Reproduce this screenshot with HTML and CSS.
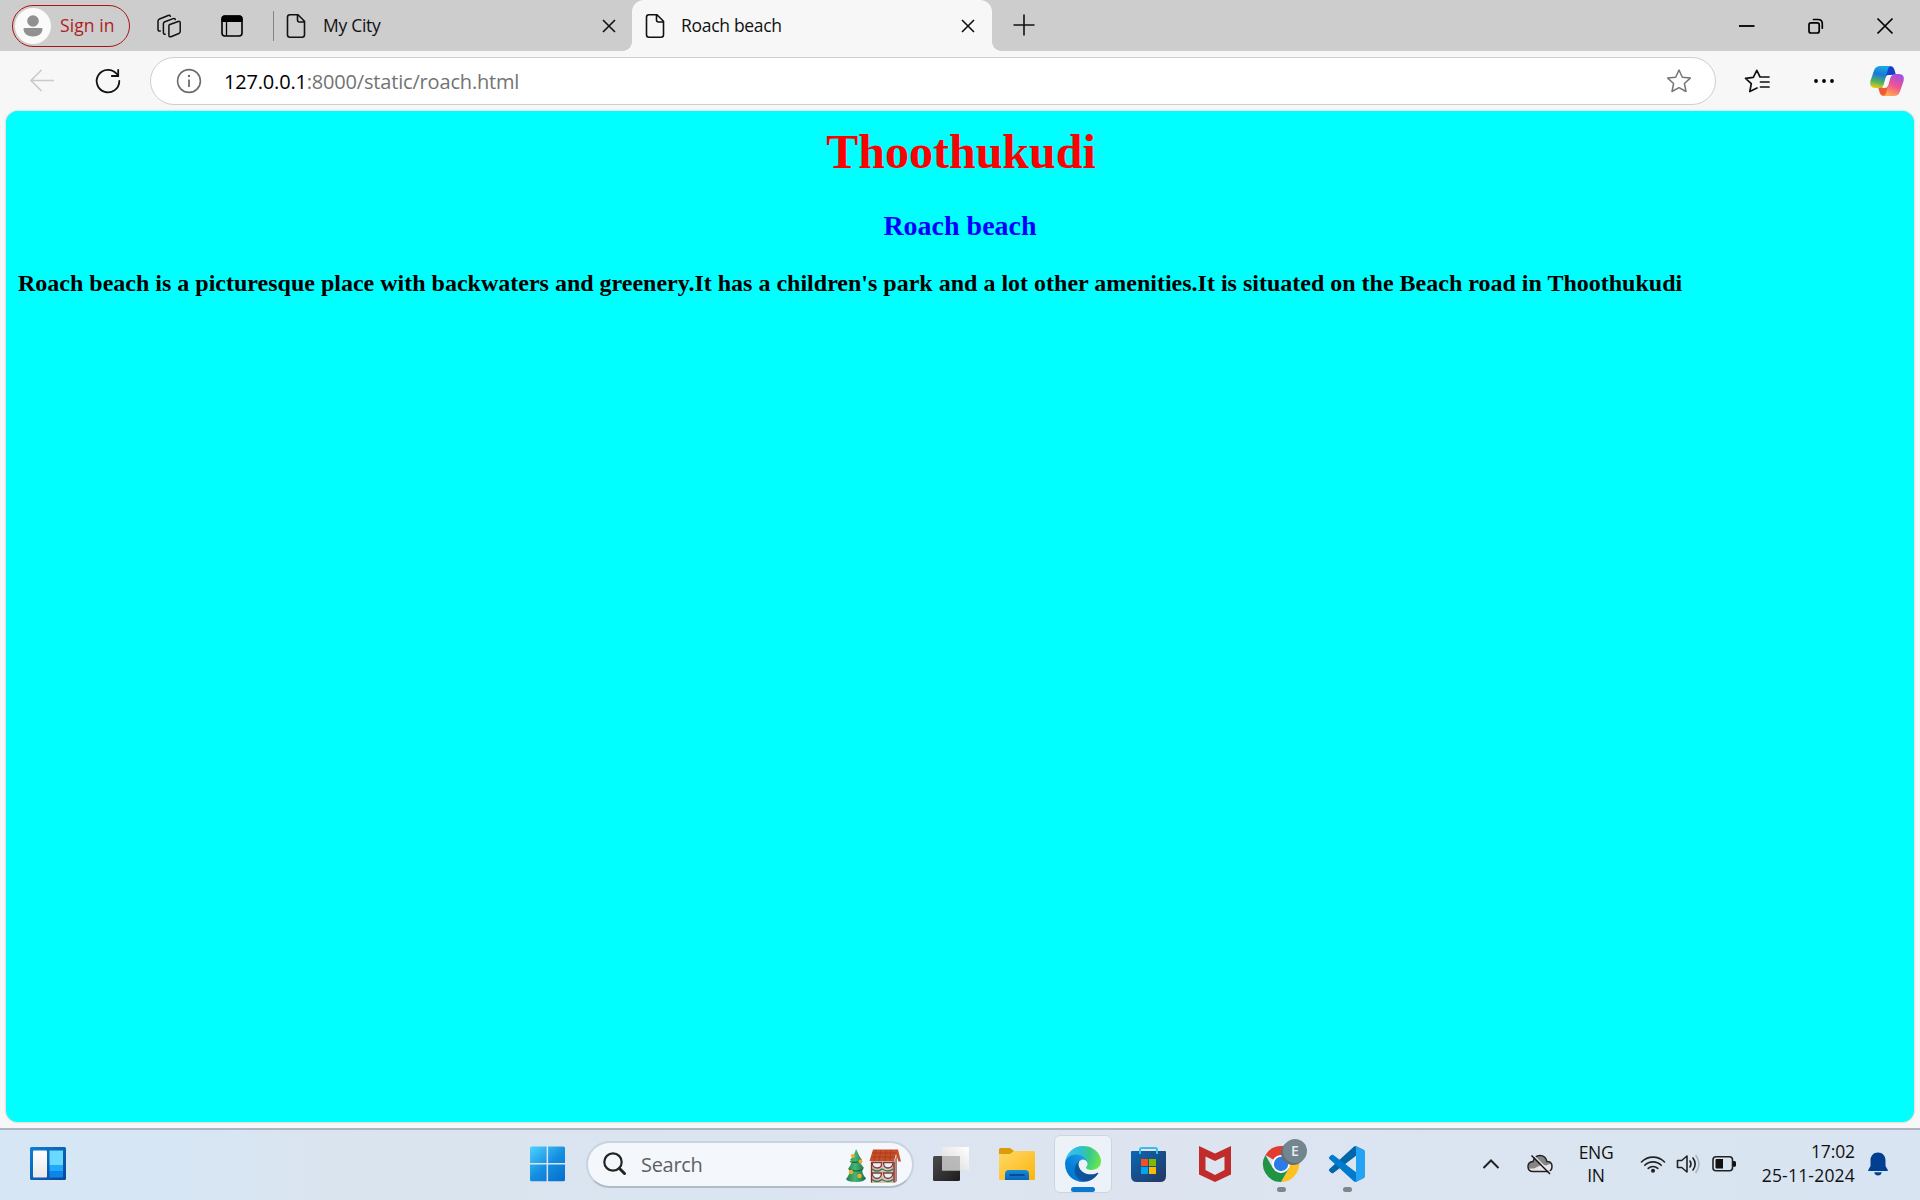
FILE: index.html
```html
<!DOCTYPE html>
<html lang="en">
<head>
<meta charset="utf-8">
<title>Roach beach</title>
<link rel="stylesheet" href="styles.css">
</head>
<body>
<div class="screen">
  <header class="tabstrip">
    <div class="signin">
      <svg class="avatar" width="36" height="36" viewBox="0 0 36 36"><circle cx="18" cy="18" r="18" fill="#fafafa"/><circle cx="18" cy="13" r="5.8" fill="#919191"/><path d="M9.500 20h17q1 0 1 1c0 4.500-4 7.400-9.500 7.400S8.500 25.500 8.500 21q0-1 1-1z" fill="#919191"/></svg>
      <span class="signin-text">Sign in</span>
    </div>
    <svg class="workspaces" width="26" height="26" viewBox="0 0 26 26" fill="none" stroke="#111" stroke-width="1.500" stroke-linejoin="round" stroke-linecap="round"><path d="M13.200 11.800l9-3.300q2-.600 2 1.300v8.800q0 1.400-1.300 1.900l-8 3.200q-2 .600-2-1.200v-9q0-1.200.300-1.700z"/><path d="M9.200 21.200q-1.800.200-1.800-1.700v-8.700q0-1.500 1.500-2.100l8.300-3.100q1.800-.500 2.100 1"/><path d="M4.300 17.900q-2.300.600-2.300-1.500V8.300q0-1.700 1.500-2.300l8.700-3.500q1.700-.500 2.200.8"/></svg>
    <svg class="tab-actions" width="22" height="22" viewBox="0 0 22 22"><rect x="1" y="1" width="20" height="20" rx="3" fill="none" stroke="#000" stroke-width="1.600"/><path d="M.500 7V3.500Q.500.500 3.500.500h15q3 0 3 3V7z"/><path d="M5.500 7v14" stroke="#000" stroke-width="1.300"/></svg>
    <i class="divider"></i>
    <div class="tab">
      <svg class="doc" width="20" height="26" viewBox="0 0 20 26" fill="none" stroke="#111" stroke-width="1.600" stroke-linejoin="round"><path d="M4 1.800h8l6.500 6.500v13.500q0 2.500-2.500 2.500H4q-2.500 0-2.500-2.500V4.300q0-2.500 2.500-2.500zM11.500 2v5q0 2 2 2h5"/></svg>
      <span class="tab-title city">My City</span>
      <svg class="tab-close" width="14" height="14" viewBox="0 0 14 14" stroke="#111" stroke-width="1.600"><path d="M1 1l12 12M13 1L1 13"/></svg>
    </div>
    <div class="tab active">
      <svg class="doc" width="20" height="26" viewBox="0 0 20 26" fill="none" stroke="#111" stroke-width="1.600" stroke-linejoin="round"><path d="M4 1.800h8l6.500 6.500v13.500q0 2.500-2.500 2.500H4q-2.500 0-2.500-2.500V4.300q0-2.500 2.500-2.500zM11.500 2v5q0 2 2 2h5"/></svg>
      <span class="tab-title roach">Roach beach</span>
      <svg class="tab-close" width="14" height="14" viewBox="0 0 14 14" stroke="#111" stroke-width="1.600"><path d="M1 1l12 12M13 1L1 13"/></svg>
    </div>
    <svg class="new-tab" width="22" height="22" viewBox="0 0 22 22" stroke="#111" stroke-width="1.600"><path d="M11 .500v21M.500 11h21"/></svg>
    <div class="window-buttons">
      <svg width="16" height="16" viewBox="0 0 16 16"><path d="M0 8h15.500" stroke="#000" stroke-width="1.800"/></svg>
      <svg width="16" height="16" viewBox="0 0 16 16" fill="none" stroke="#000" stroke-width="1.700"><rect x="1" y="4.800" width="10.200" height="10.200" rx="2"/><path d="M5.500 1.500H10q4.300 0 4.300 4.300v4.400" stroke-linecap="round"/></svg>
      <svg width="16" height="16" viewBox="0 0 16 16" stroke="#000" stroke-width="1.700"><path d="M.500.500l15 15M15.500.500l-15 15"/></svg>
    </div>
  </header>

  <nav class="toolbar">
    <svg class="back" width="26" height="24" viewBox="0 0 26 24" fill="none" stroke="#cacaca" stroke-width="1.600"><path d="M25 11.500H2M12.500 1L2 11.500 12.500 22"/></svg>
    <svg class="reload" width="26" height="26" viewBox="0 0 26 26" fill="none" stroke="#111" stroke-width="1.800" stroke-linecap="round"><path d="M24.300 13A11.300 11.300 0 1 1 21.800 6M23.200 1.800v6.200h-6.400"/></svg>
    <div class="address">
      <svg class="info" width="26" height="26" viewBox="0 0 26 26" fill="none" stroke="#6b6b6b" stroke-width="1.600"><circle cx="13" cy="13" r="11.400"/><path d="M13 11.500V19" stroke-width="1.800"/><circle cx="13" cy="8" r="1.200" fill="#6b6b6b" stroke="none"/></svg>
      <span class="url"><b>127.0.0.1</b>:8000/static/roach.html</span>
      <svg class="star" width="26" height="26" viewBox="0 0 26 26" fill="none" stroke="#757575" stroke-width="1.500" stroke-linejoin="round"><path d="M13 2l3.300 7.200 8 .900-5.900 5.400 1.600 8L13 19.700 6 23.500l1.600-8L1.700 10.100l8-.9z"/></svg>
    </div>
    <svg class="favorites" width="26" height="26" viewBox="0 0 26 26" fill="none" stroke="#111" stroke-width="1.700" stroke-linejoin="round" stroke-linecap="round"><path d="M13 20l-7.200 3.500 1.500-7.800L1.500 10.300l7.800-1L12.800 2.300l3.200 6.500M16 9h9M16.500 14H25M16.500 19H25"/></svg>
    <svg class="more" width="20" height="6" viewBox="0 0 20 6"><circle cx="2" cy="3" r="1.900"/><circle cx="10" cy="3" r="1.900"/><circle cx="18" cy="3" r="1.900"/></svg>
    <svg class="copilot" width="34" height="30" viewBox="0 0 34 30">
      <defs>
        <linearGradient id="cpA" x1=".4" y1="0" x2=".2" y2="1"><stop offset="0" stop-color="#16a7e8"/><stop offset=".35" stop-color="#1879d8"/><stop offset=".7" stop-color="#53b25c"/><stop offset="1" stop-color="#f2cf10"/></linearGradient>
        <linearGradient id="cpB" x1=".7" y1="0" x2=".3" y2="1"><stop offset="0" stop-color="#a24ee8"/><stop offset=".5" stop-color="#ee5394"/><stop offset="1" stop-color="#ffac50"/></linearGradient>
      </defs>
      <path d="M16 0h3.500c3 0 4.200 1.200 5 4l1.500 5h-7q-3 0-4 3z" fill="#173fc8"/>
      <path d="M18 30h-3.500c-3 0-4.200-1.200-5-4L8 21h7q3 0 4-3z" fill="#f05a36"/>
      <path d="M10.500 0H21q-2.500.500-3.300 4L14 17.500Q13 22 9 22H5Q-1 22 .4 15L4 4.500Q5.500 0 10.500 0z" fill="url(#cpA)"/>
      <path d="M23.500 30H13q2.500-.500 3.300-4L20 12.500Q21 8 25 8h4q6 0 4.600 7L30 25.500Q28.500 30 23.500 30z" fill="url(#cpB)"/>
      <path d="M18.700 9h4q-2 .600-2.700 3.500L18 19.500Q17.200 22 14.800 22H11.500q2-.8 2.600-3.500l2.200-7.200Q17 9 18.700 9z" fill="#f7f7f7"/>
    </svg>
  </nav>

  <main class="page">
    <h1>Thoothukudi</h1>
    <h2>Roach beach</h2>
    <p>Roach beach is a picturesque place with backwaters and greenery.It has a children's park and a lot other amenities.It is situated on the Beach road in Thoothukudi</p>
  </main>

  <footer class="taskbar">
    <svg class="widgets" width="36" height="33" viewBox="0 0 36 33">
      <defs><linearGradient id="wg" x1="0" y1="0" x2="1" y2="1"><stop offset="0" stop-color="#0c7fd6"/><stop offset="1" stop-color="#0b4796"/></linearGradient><linearGradient id="wh" x1="0" y1="0" x2="0" y2="1"><stop offset="0" stop-color="#fff"/><stop offset="1" stop-color="#e8e8ec"/></linearGradient></defs>
      <rect width="36" height="33" rx="1.500" fill="url(#wg)"/><rect x="3" y="3.500" width="14" height="27" rx="1" fill="url(#wh)"/><path d="M19.500 3.500H33V18H19.500z" fill="#69d9ff"/><path d="M19.500 18H33v6H19.500z" fill="#24a8fa"/><path d="M19.500 24H33v6.500H19.500z" fill="#0b86ea"/>
    </svg>
    <svg class="start" width="36" height="36" viewBox="0 0 36 36">
      <defs><linearGradient id="win" gradientUnits="userSpaceOnUse" x1="0" y1="0" x2="30" y2="36"><stop offset="0" stop-color="#4fd3ff"/><stop offset=".55" stop-color="#168ee0"/><stop offset="1" stop-color="#0671cf"/></linearGradient></defs>
      <path fill="url(#win)" d="M1.500.500H16.600V17.100H0V2Q0 .500 1.500.500zM18.100.500H33.500Q35 .500 35 2V17.100H18.100zM0 18.500H16.600V35.200H1.500Q0 35.200 0 33.700zM18.100 18.500H35V33.700Q35 35.200 33.500 35.200H18.100z"/>
    </svg>
    <div class="search">
      <svg class="lens" width="24" height="24" viewBox="0 0 24 24" fill="none" stroke="#242424" stroke-linecap="round"><circle cx="10" cy="10" r="8.700" stroke-width="2.200"/><path d="M16.500 16.500l5 5" stroke-width="3"/></svg>
      <span class="search-text">Search</span>
      <svg class="holiday" width="56" height="36" viewBox="0 0 56 36">
        <defs><linearGradient id="tree" x1="0" y1="0" x2="1" y2="0"><stop offset="0" stop-color="#1d7d4d"/><stop offset=".45" stop-color="#47b673"/><stop offset="1" stop-color="#196a45"/></linearGradient><linearGradient id="wall" x1="0" y1="0" x2="1" y2="0"><stop offset="0" stop-color="#dfb3aa"/><stop offset=".75" stop-color="#e7c7c2"/><stop offset="1" stop-color="#a77972"/></linearGradient></defs>
        <path d="M11 1l2 4q1 3 4 7l-2 1q1 4 4 7l-2 2q1 6 4 8-1 4-10 4T1 31q4-5 4-9l-2-1q3-4 4-8l-2-1q4-4 6-11z" fill="url(#tree)"/>
        <path d="M5 13.500q6 2 11-.5M4 21.500q7 3 14 0" stroke="#12623e" fill="none" stroke-width="1.200"/>
        <g fill="#efad2b"><circle cx="8" cy="8" r="2"/><circle cx="15.500" cy="13.500" r="2"/><circle cx="6" cy="24" r="2.300"/><circle cx="14.500" cy="28" r="2.300"/></g>
        <path d="M26 13h23l3-6v26l-2 2H26z" fill="url(#wall)"/>
        <g fill="#e4f0fa" stroke="#803c34" stroke-width="1.300"><path d="M27 14.500h9.500v2q0 3-4 3.500-5 0-5.500-5.500zM38.500 14.500H48q0 5-5 5.500-4.500 0-4.500-5.500zM27 25h9.500q0 5-4.500 5.500-4.500-.5-5-5.500zM38.500 25H48q-.5 5-5 5.500-4.500-.5-4.500-5.500z"/></g>
        <path d="M27 21q5 4 10 0 6 4 11 0M27 31.500q5 4 10 0 6 4 11 0" fill="none" stroke="#28834a" stroke-width="1.500"/>
        <path d="M26.500 34.500V14M49 14v20" stroke="#823229" stroke-width="1.300" fill="none"/>
        <path d="M28 1.500h25l3 12h-2.500L51 6l-2 7H24.500z" fill="#c74e27"/><path d="M27 5h24M26 9h24M31 2l-2 11M36 2l-2 11M41 2l-1 11M46 2l-1 11" stroke="#a83b20" stroke-width=".8" fill="none"/>
      </svg>
    </div>
    <svg class="taskview" width="36" height="36" viewBox="0 0 36 36">
      <defs><linearGradient id="dk" x1="0" y1="0" x2="1" y2="1"><stop offset="0" stop-color="#4c4c4c"/><stop offset="1" stop-color="#1c1c1c"/></linearGradient><linearGradient id="lt" x1="1" y1="0" x2="0" y2="1"><stop offset="0" stop-color="#fff"/><stop offset="1" stop-color="#d7d7d7"/></linearGradient></defs>
      <rect y="10" width="27" height="25" rx="1.500" fill="url(#dk)"/><path d="M9 2q0-1 1-1h25q1 0 1 1v22.500H9z" fill="url(#lt)"/><path d="M9 10h18v14.500H9z" fill="#aaa" opacity=".75"/>
    </svg>
    <svg class="folder" width="36" height="36" viewBox="0 0 36 36">
      <defs><linearGradient id="fo" x1="0" y1="0" x2="1" y2="1"><stop offset="0" stop-color="#ffd968"/><stop offset="1" stop-color="#fbb50c"/></linearGradient><linearGradient id="fb" x1="0" y1="0" x2="0" y2="1"><stop offset="0" stop-color="#168bdd"/><stop offset="1" stop-color="#0866bb"/></linearGradient></defs>
      <path d="M0 3.500Q0 2 1.500 2H11l4 3v6H0z" fill="#dd9b05"/><path d="M0 8h11l4-3h19.500Q36 5 36 6.500V32.500Q36 34 34.500 34h-33Q0 34 0 32.500z" fill="url(#fo)"/><path d="M6 34v-6q0-4 4-4h16q4 0 4 4v6z" fill="url(#fb)"/><path d="M11 29h14" stroke="#084c91" stroke-width="1.800" stroke-linecap="round"/>
    </svg>
    <div class="app current">
      <svg width="36" height="36" viewBox="0 0 256 256">
        <defs>
          <linearGradient id="e1" gradientUnits="userSpaceOnUse" x1="63" y1="177" x2="241" y2="177"><stop offset="0" stop-color="#0c59a4"/><stop offset="1" stop-color="#114a8b"/></linearGradient>
          <linearGradient id="e2" gradientUnits="userSpaceOnUse" x1="157" y1="100" x2="46" y2="221"><stop offset="0" stop-color="#1b9de2"/><stop offset=".16" stop-color="#1595df"/><stop offset=".67" stop-color="#0680d7"/><stop offset="1" stop-color="#0078d4"/></linearGradient>
          <radialGradient id="e3" gradientUnits="userSpaceOnUse" cx="26" cy="47" r="230"><stop offset="0" stop-color="#35c1f1"/><stop offset=".35" stop-color="#2cbfd8"/><stop offset=".65" stop-color="#36c98e"/><stop offset="1" stop-color="#69e650"/></radialGradient>
        </defs>
        <path fill="url(#e1)" d="M231 190.500c-3.400 1.800-6.900 3.400-10.500 4.700a101.900 101.900 0 0 1-35.900 6.500c-47.300 0-88.500-32.500-88.500-74.300a31.500 31.500 0 0 1 16.400-27.300c-42.800 1.800-53.800 46.400-53.800 72.500 0 73.900 68.100 81.400 82.800 81.400 7.900 0 19.800-2.300 27-4.600l1.300-.4a128.300 128.300 0 0 0 66.600-52.800 4 4 0 0 0-5.400-5.700z"/>
        <path fill="url(#e2)" d="M105.700 241.400a79.200 79.200 0 0 1-22.700-21.300 80.700 80.700 0 0 1 29.500-120c3.200-1.500 8.500-4.100 15.600-4a32.400 32.400 0 0 1 25.700 13 31.900 31.900 0 0 1 6.300 18.700c0-.2 24.500-79.600-80-79.600C36.200 48.200.2 89.900.2 126.400a130.600 130.600 0 0 0 12.100 56 128 128 0 0 0 156.400 67.100 75.500 75.500 0 0 1-62.800-8z"/>
        <path fill="url(#e3)" d="M152.300 148.900c-.9 1-3.400 2.500-3.400 5.600 0 2.600 1.700 5.200 4.800 7.300 14.400 10 41.500 8.700 41.600 8.700a59.600 59.600 0 0 0 30.300-8.300A61.400 61.400 0 0 0 256 109.100c.3-22.400-8-37.300-11.300-43.900C223.500 23.900 177.700 0 128 0A128 128 0 0 0 0 126.200c.5-36.500 36.800-66 80-66 3.500 0 23.500.3 42 10.100a72.600 72.600 0 0 1 30.900 29.300c6.100 10.600 7.200 24.100 7.200 29.500s-2.700 13.300-7.800 19.800z"/>
      </svg>
      <i></i>
    </div>
    <svg class="store" width="36" height="36" viewBox="0 0 36 36">
      <defs><linearGradient id="st" x1="0" y1="0" x2="1" y2="1"><stop offset="0" stop-color="#0c67b6"/><stop offset="1" stop-color="#24365f"/></linearGradient></defs>
      <path d="M1 5h33q1 0 1 1v24q0 6-6 6H6q-6 0-6-6V6q0-1 1-1z" fill="url(#st)"/><path d="M9 8V3.500Q9 2 10.500 2h14Q26 2 26 3.500V8" fill="none" stroke="#38bdf0" stroke-width="2"/><path d="M10 13h7v7h-7z" fill="#f25022"/><path d="M18 13h7v7h-7z" fill="#7fba00"/><path d="M10 21h7v7h-7z" fill="#00a4ef"/><path d="M18 21h7v7h-7z" fill="#ffb900"/>
    </svg>
    <svg class="mcafee" width="32" height="36" viewBox="0 0 32 36"><path d="M0 0l16 7.500L32 0v28.500L16 36 0 28.500zM6.500 10.500V24L16 29l9.500-5V10.500L16 15z" fill="#c02b2c" fill-rule="evenodd"/></svg>
    <div class="app chrome">
      <svg width="36" height="36" viewBox="0 0 36 36"><path d="M18 18L2.400 9A18 18 0 0 1 33.600 9H18z" fill="#e33b2e"/><path d="M33.600 9A18 18 0 0 1 18 36l7.800-13.500L25.800 9z" fill="#fdc221"/><path d="M2.400 9A18 18 0 0 0 18 36l7.800-13.500L18 18l-7.800 4.500z" fill="#219345"/><circle cx="18" cy="18" r="9" fill="#fff"/><circle cx="18" cy="18" r="7.200" fill="#2c7bea"/></svg>
      <span class="badge">E</span>
      <i></i>
    </div>
    <div class="app code">
      <svg width="36" height="36" viewBox="0 0 100 100"><path d="M96.500 10.800L75.900.900a6.200 6.200 0 0 0-7.100 1.200L1.300 63.600a4.200 4.200 0 0 0 0 6.200l5.500 5a4.200 4.200 0 0 0 5.300.2L93.400 13.400A4.100 4.100 0 0 1 100 16.700v-.2a6.200 6.200 0 0 0-3.500-5.700z" fill="#0065a9"/><path d="M96.500 89.200l-20.600 9.900a6.200 6.200 0 0 1-7.100-1.200L1.300 36.400a4.200 4.200 0 0 1 0-6.200l5.500-5a4.200 4.200 0 0 1 5.300-.2l81.300 61.600a4.100 4.100 0 0 0 6.600-3.300v.2a6.200 6.200 0 0 1-3.500 5.700z" fill="#007acc"/><path d="M75.900 99.100a6.200 6.200 0 0 1-7.100-1.200 3.700 3.700 0 0 0 6.200-2.600V4.700a3.700 3.700 0 0 0-6.200-2.600 6.200 6.200 0 0 1 7.100-1.200l20.600 9.900a6.200 6.200 0 0 1 3.500 5.600v67.200a6.200 6.200 0 0 1-3.500 5.600z" fill="#23a4f2"/></svg>
      <i></i>
    </div>
    <svg class="chevron" width="18" height="12" viewBox="0 0 18 12" fill="none" stroke="#222" stroke-width="2"><path d="M1.500 10L9 2.500 16.500 10"/></svg>
    <svg class="cloud" width="26" height="22" viewBox="0 0 26 22"><path d="M6 18.500q-5 0-5-5 0-4.500 5-5Q7.500 2.500 13 2.500T20 8.500q5 0 5 5t-5 5z" fill="#e7e5e5"/><path d="M6 8.500Q7.500 2.500 13 2.500t7 6l4 2-5 2-4-1-8 4H2q-2-6 4-7z" fill="#858585"/><path d="M6 18.500q-5 0-5-5 0-4.500 5-5Q7.500 2.500 13 2.500T20 8.500q5 0 5 5t-5 5z" fill="none" stroke="#222" stroke-width="1.500"/><path d="M6.500 2.500l17 17" stroke="#dce5ef" stroke-width="1.500"/><path d="M4.500 2.500l18.500 18.500" stroke="#111" stroke-width="1.500"/></svg>
    <div class="language"><span>ENG</span><span>IN</span></div>
    <svg class="wifi" width="26" height="18" viewBox="0 0 26 18" fill="none" stroke="#222" stroke-width="1.600" stroke-linecap="round"><path d="M1.500 7a16 16 0 0 1 23 0M4.800 10.300a11.500 11.500 0 0 1 16.400 0M8.200 13.400a7 7 0 0 1 9.600 0"/><circle cx="13" cy="15.800" r="2" fill="#222" stroke="none"/></svg>
    <svg class="volume" width="25" height="20" viewBox="0 0 25 20" fill="none" stroke="#222" stroke-width="1.600" stroke-linecap="round" stroke-linejoin="round"><path d="M1.500 6.500h4.200L11 2v16l-5.300-4.500H1.500zM14 7q2 3 0 6M17 4q4.300 6 0 12"/><path d="M20 1.500q6 8.500 0 17" stroke="#adb5be"/></svg>
    <svg class="battery" width="25" height="18" viewBox="0 0 25 18"><rect x="1" y="1.800" width="19.500" height="14" rx="3" fill="none" stroke="#222" stroke-width="1.600"/><path d="M3.500 5q0-1 1-1H11v9.500H4.500q-1 0-1-1z" fill="#111"/><path d="M21 6h1.500q1.500 0 1.500 1.500v2.700q0 1.500-1.500 1.500H21z" fill="#111"/></svg>
    <div class="clock"><span class="time">17:02</span><span>25-11-2024</span></div>
    <svg class="bell" width="20" height="24" viewBox="0 0 20 24" fill="#003f92"><path d="M10 .500c4.500 0 7.500 3.500 7.500 8v5.500l2.300 4q.500 1-.600 1H.800q-1.100 0-.600-1l2.300-4V8.500c0-4.500 3-8 7.500-8zM6.300 20.200h7.400q-.700 3.200-3.700 3.200t-3.700-3.200z"/></svg>
  </footer>
</div>
</body>
</html>
```
FILE: styles.css
```css
* { box-sizing: border-box; }
html, body { margin: 0; width: 100%; height: 100%; overflow: hidden; }
body { font-family: "Open Sans", "Noto Sans", sans-serif; color: #111; }
svg { display: block; flex: none; overflow: visible; }
.screen { width: 1920px; height: 1200px; display: flex; flex-direction: column; background: #f7f7f7; }

.tabstrip { height: 51px; flex: none; display: flex; align-items: center; background: #cdcdcd; }
.signin { width: 118px; height: 42px; margin-left: 12px; padding-left: 2px; display: flex; align-items: center; border: 1.500px solid #a91515; border-radius: 21px; flex: none; }
.signin-text { margin-left: 9px; font-size: 17.500px; color: #ae2020; white-space: nowrap; letter-spacing: .1px; margin-top: -1px; }
.workspaces { margin-left: 26px; }
.tab-actions { margin-left: 39px; }
.divider { width: 1px; height: 30px; margin-left: 30px; background: #858585; flex: none; }
.tab { width: 358px; height: 51px; flex: none; display: flex; align-items: center; padding: 0 16px 0 12px; }
.tab.active { width: 360px; background: #f7f7f7; border-radius: 12px 12px 0 0; padding-left: 13px; position: relative; }
.tab.active::before, .tab.active::after { content: ""; position: absolute; bottom: 0; width: 9px; height: 9px; }
.tab.active::before { left: -9px; background: radial-gradient(circle at 0 0, transparent 8.500px, #f7f7f7 9px); }
.tab.active::after { right: -9px; background: radial-gradient(circle at 100% 0, transparent 8.500px, #f7f7f7 9px); }
.tab-title { margin-left: 17px; margin-top: -1px; font-size: 17.500px; white-space: nowrap; letter-spacing: -.3px; }
.roach { margin-left: 16px; }
.tab-close { margin-left: auto; }
.active .tab-close { margin-right: 1px; }
.new-tab { margin-left: 21px; margin-bottom: 1px; }
.window-buttons { display: flex; gap: 53px; margin: 0 27px 0 auto; }

.toolbar { height: 60px; flex: none; display: flex; align-items: center; }
.back { margin-left: 29px; }
.reload { margin-left: 40px; }
.address { width: 1566px; height: 48px; margin-left: 29px; display: flex; align-items: center; background: #fff; border: 1.500px solid #cecece; border-radius: 24px; flex: none; }
.info { margin-left: 25px; }
.url { margin-left: 22px; font-size: 20px; color: #737373; white-space: nowrap; letter-spacing: -.18px; }
.url b { font-weight: 400; color: #000; }
.star { margin: 0 23px 0 auto; }
.favorites { margin-left: 28px; }
.more { margin-left: 44px; }
.copilot { margin-left: 36px; }

.page { height: 1011px; flex: none; margin: 0 6px; padding: 14px 12px; background: #00ffff; border-radius: 12px; font-family: "Liberation Serif", serif; font-weight: bold; box-shadow: 0 0 2px #aaa; }
.page h1 { margin: 0; padding-left: 2px; font-size: 48px; line-height: 54px; color: #f00; text-align: center; }
.page h2 { margin: 31px 0 0; font-size: 28px; line-height: 32px; color: #00f; text-align: center; }
.page p { margin: 28px 0 0; font-size: 24px; line-height: 27px; color: #000; white-space: nowrap; }

.taskbar { height: 72px; flex: none; margin-top: 6px; padding-top: 1px; border-top: 2px solid #adb6c0; display: flex; align-items: center; background: linear-gradient(90deg, #d6e6f4 0, #d7e6f4 180px, #dae4ef 340px, #dbe5f1 760px, #dde4f0 1150px, #dae5f1 1500px, #d8e4f1 100%); }
.widgets { margin-left: 30px; margin-bottom: 4px; }
.start { margin-left: 464px; margin-bottom: 3px; }
.search { width: 328px; height: 47px; margin: 0 0 3px 20px; display: flex; align-items: center; background: #f4f8fc; border: 2px solid #c9d3df; border-bottom-color: #b2bcc7; border-radius: 24px; flex: none; }
.lens { margin-left: 15px; }
.search-text { margin-left: 14px; font-size: 20px; color: #5e6064; letter-spacing: -.3px; }
.holiday { margin: 4px 11px 0 auto; }
.taskview { margin: 0 0 3px 19px; }
.folder { margin: 0 0 3px 30px; }
.app { position: relative; width: 36px; height: 58px; display: flex; align-items: center; justify-content: center; flex: none; margin-bottom: 3px; }
.app i { position: absolute; bottom: 1px; left: 14px; width: 9px; height: 5px; border-radius: 3px; background: #80858c; }
.current { width: 58px; margin-left: 19px; background: #edf2f9; border: 1.500px solid #cdd5e0; border-radius: 6px; }
.current i { left: 16px; bottom: 0; width: 24px; background: #0878d1; }
.store { margin: 0 0 3px 19px; }
.mcafee { margin: 0 0 3px 32px; }
.chrome { margin-left: 32px; }
.badge { position: absolute; left: 20px; top: 4px; width: 24px; height: 24px; border-radius: 50%; background: #73868f; box-shadow: -2px 2px 0 #5f7079; color: #e3edf1; font-size: 14px; line-height: 24px; text-align: center; font-weight: 600; }
.code { margin-left: 30px; }
.chevron { margin-left: 117px; margin-bottom: 4px; }
.cloud { margin-left: 27px; margin-bottom: 4px; }
.language, .clock { display: flex; flex-direction: column; flex: none; font-size: 17.500px; line-height: 24px; white-space: nowrap; }
.language { width: 36px; margin: 0 0 3px 25px; line-height: 23px; text-align: center; letter-spacing: -.3px; }
.wifi { margin: 0 0 4px 26px; }
.volume { margin: 0 0 4px 10px; }
.battery { margin: 0 0 4px 11px; }
.clock { width: 118px; margin-bottom: 5px; text-align: right; letter-spacing: .2px; }
.time { letter-spacing: -.1px; }
.bell { margin: 0 0 3px 13px; }
```
